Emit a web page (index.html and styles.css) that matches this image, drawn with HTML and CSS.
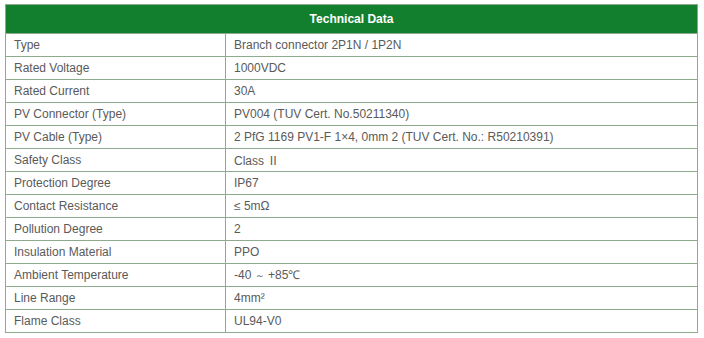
FILE: index.html
```html
<!DOCTYPE html>
<html>
<head>
<meta charset="utf-8">
<link rel="stylesheet" href="styles.css">
</head>
<body>
<div class="wrap">
<table class="spec">
  <thead>
    <tr><th colspan="2">Technical Data</th></tr>
  </thead>
  <tbody>
    <tr><td class="k">Type</td><td>Branch connector 2P1N / 1P2N</td></tr>
    <tr><td class="k">Rated Voltage</td><td>1000VDC</td></tr>
    <tr><td class="k">Rated Current</td><td>30A</td></tr>
    <tr><td class="k">PV Connector (Type)</td><td>PV004 (TUV Cert. No.50211340)</td></tr>
    <tr><td class="k">PV Cable (Type)</td><td>2 PfG 1169 PV1-F 1×4, 0mm 2 (TUV Cert. No.: R50210391)</td></tr>
    <tr><td class="k">Safety Class</td><td>Class <span class="cjk">Ⅱ</span></td></tr>
    <tr><td class="k">Protection Degree</td><td>IP67</td></tr>
    <tr><td class="k">Contact Resistance</td><td>≤ 5mΩ</td></tr>
    <tr><td class="k">Pollution Degree</td><td>2</td></tr>
    <tr><td class="k">Insulation Material</td><td>PPO</td></tr>
    <tr><td class="k">Ambient Temperature</td><td>-40 <span class="tilde">～</span> +85℃</td></tr>
    <tr><td class="k">Line Range</td><td>4mm²</td></tr>
    <tr><td class="k">Flame Class</td><td>UL94-V0</td></tr>
  </tbody>
</table>
</div>
</body>
</html>
```
FILE: styles.css
```css
html, body {
  margin: 0;
  padding: 0;
  background: #ffffff;
}
.wrap {
  padding: 4px 0 0 5px;
}
.spec {
  border-collapse: collapse;
  width: 693px;
  font-family: "Liberation Sans", Arial, sans-serif;
  font-size: 12px;
  color: #5a5a5a;
}
.spec th, .spec td {
  border: 1px solid #8eab8e;
  text-align: left;
  padding: 0 8px;
  line-height: 14px;
}
.spec th {
  background: #127f2e;
  color: #ffffff;
  font-weight: bold;
  text-align: center;
  height: 28px;
  padding: 0;
}
.spec td {
  height: 22px;
}
.spec td.k {
  width: 203px;
}
.cjk {
  font-family: "Noto Sans CJK SC", sans-serif;
  font-size: 12px;
}
.tilde {
  font-family: "DejaVu Sans", sans-serif;
  font-size: 10px;
}
```
